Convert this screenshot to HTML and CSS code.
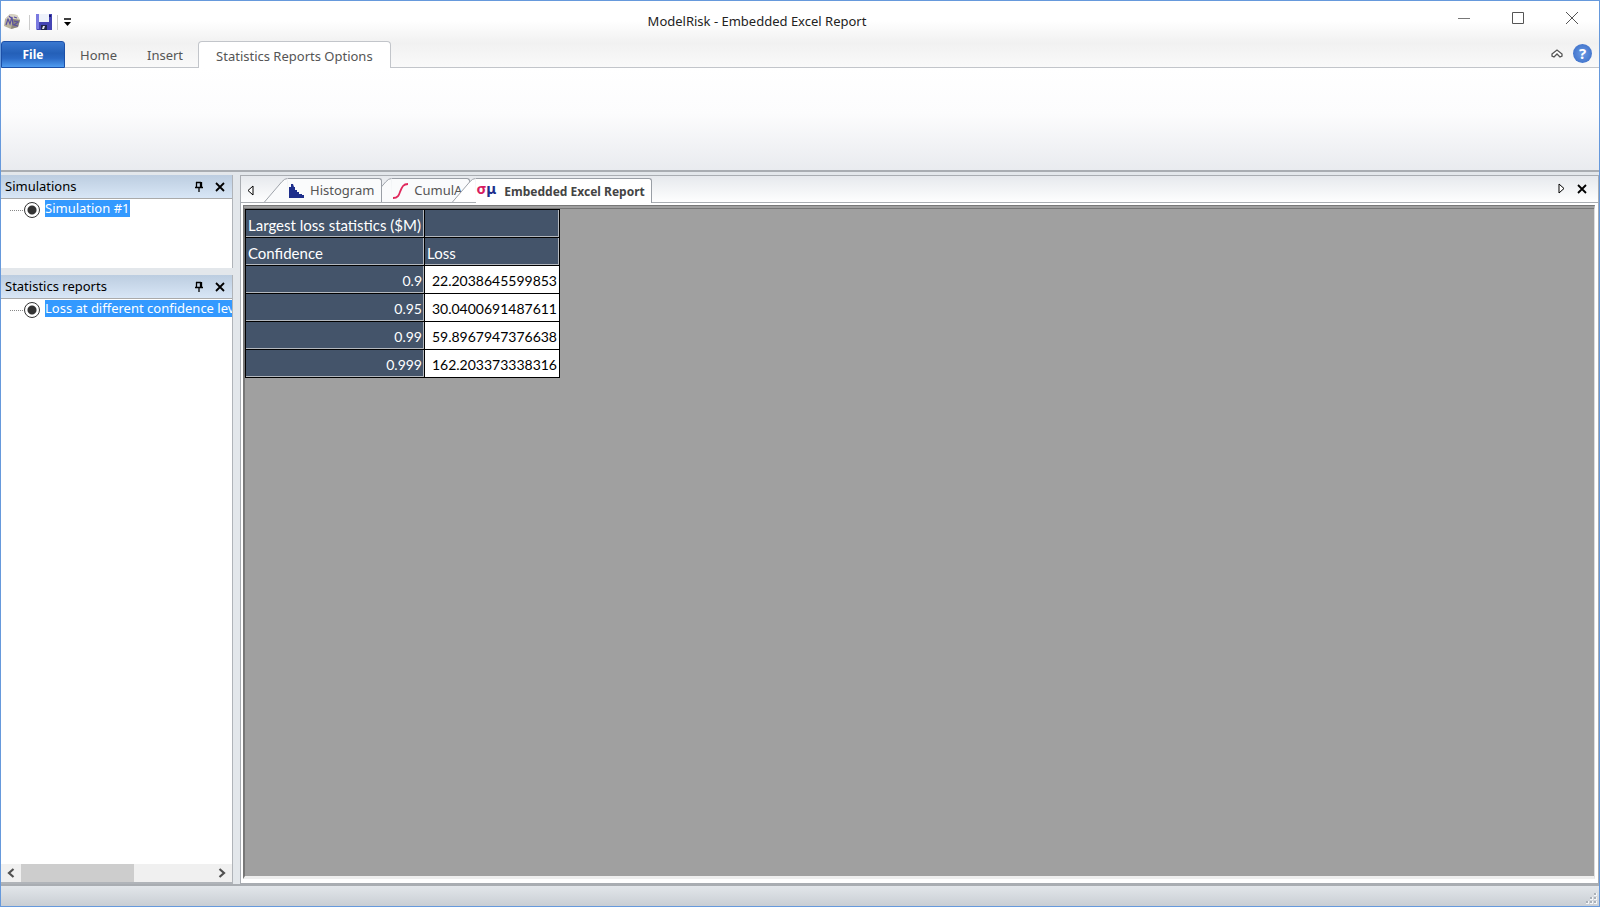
FILE: index.html
```html
<!DOCTYPE html>
<html lang="en">
<head>
  <meta charset="UTF-8">
  <meta name="viewport" content="width=device-width, initial-scale=1.0">
  <title>ModelRisk - Embedded Excel Report</title>
  <link rel="stylesheet" href="styles.css">
</head>
<body>
  <header class="top">
    <div class="titlebar">
      <div class="quick">
        <svg class="logo" width="18" height="18" viewBox="0 0 18 18">
          <path d="M2 6 L7 1 L14 2 L17 7 L15 14 L8 16 L1 13 Z" fill="#b9b39d"/>
          <path d="M2 6 L7 1 L14 2 L17 7 L10 6 Z" fill="#d8d3c4"/>
          <path d="M10 6 L17 7 L15 14 L8 16 Z" fill="#8d877c"/>
          <path d="M3 12 L5 6 L7 11 L9 4 L10 12 M11 4 L14 5 M11 8 L15 9 L11 12 L15 13 M6 3 L8 5" fill="none" stroke="#5a50a0" stroke-width="1.2"/>
        </svg>
        <span class="sep"></span>
        <button class="icon-btn" aria-label="Save">
          <svg width="16" height="16" viewBox="0 0 16 16">
            <path d="M0 0 H16 V16 H1 L0 15 Z" fill="#4444b4"/>
            <path d="M0 0 H3 V15 H0 Z" fill="#7a7ae0"/>
            <rect x="3" y="0" width="10" height="8" fill="#eef2fb"/>
            <rect x="13" y="1" width="2" height="2" fill="#1c1c70"/>
            <rect x="5" y="11" width="6" height="5" fill="#20264c"/>
            <path d="M6 15 L7 12 H9 L8 15 Z" fill="#e4e6ee"/>
          </svg>
        </button>
        <span class="sep"></span>
        <button class="icon-btn" aria-label="Customize">
          <svg width="7" height="8" viewBox="0 0 7 8">
            <path d="M0 1 H7" stroke="#000" stroke-width="1.5"/>
            <path d="M0 4 H7 L3.500 8 Z" fill="#000"/>
          </svg>
        </button>
      </div>
      <h1>ModelRisk - Embedded Excel Report</h1>
      <div class="win-btns">
        <button aria-label="Minimize"><svg width="12" height="12"><path d="M0 6.500 H12" stroke="#777" fill="none"/></svg></button>
        <button aria-label="Maximize"><svg width="12" height="12"><path d="M.5 .5 H11.500 V11.500 H.5 Z" stroke="#555" fill="none"/></svg></button>
        <button aria-label="Close"><svg width="12" height="12"><path d="M0 0 L12 12 M12 0 L0 12" stroke="#555" fill="none"/></svg></button>
      </div>
    </div>

    <nav class="ribbon-tabs">
      <button class="file">File</button>
      <button class="rtab">Home</button>
      <button class="rtab">Insert</button>
      <button class="rtab active">Statistics Reports Options</button>
      <div class="ribbon-end">
        <button class="icon-btn" aria-label="Collapse ribbon">
          <svg width="12" height="9" viewBox="0 0 12 9">
            <path d="M1 5 L6 1 L11 5 V7 L9 8 L6 5 L3 8 L1 7 Z" fill="#fff" stroke="#555" stroke-width="1.3"/>
          </svg>
        </button>
        <button class="icon-btn help" aria-label="Help">?</button>
      </div>
    </nav>
  </header>

  <section class="ribbon"></section>

  <div class="work">
    <aside class="side">
      <section class="panel sims">
        <header class="panel-head">
          <h2>Simulations</h2>
          <button class="icon-btn" aria-label="Pin Simulations">
            <svg width="10" height="12" viewBox="0 0 10 12"><path d="M2.500 1 V6 M2 1.500 H7 M6.500 1 V6 M7.500 1 V6 M1 6.500 H9 M5 7 V11" stroke="#000" stroke-width="1.3" fill="none"/></svg>
          </button>
          <button class="icon-btn" aria-label="Close Simulations">
            <svg width="10" height="10" viewBox="0 0 10 10"><path d="M1 1 L9 9 M9 1 L1 9" stroke="#000" stroke-width="1.8"/></svg>
          </button>
        </header>
        <div class="tree">
          <input type="radio" id="sim1" name="sim" checked>
          <label for="sim1">Simulation #1</label>
        </div>
      </section>

      <section class="panel reports">
        <header class="panel-head">
          <h2>Statistics reports</h2>
          <button class="icon-btn" aria-label="Pin Statistics reports">
            <svg width="10" height="12" viewBox="0 0 10 12"><path d="M2.500 1 V6 M2 1.500 H7 M6.500 1 V6 M7.500 1 V6 M1 6.500 H9 M5 7 V11" stroke="#000" stroke-width="1.3" fill="none"/></svg>
          </button>
          <button class="icon-btn" aria-label="Close Statistics reports">
            <svg width="10" height="10" viewBox="0 0 10 10"><path d="M1 1 L9 9 M9 1 L1 9" stroke="#000" stroke-width="1.8"/></svg>
          </button>
        </header>
        <div class="tree">
          <input type="radio" id="rep1" name="report" checked>
          <label for="rep1">Loss at different confidence levels</label>
        </div>
        <div class="hscroll">
          <button class="icon-btn" aria-label="Scroll left">
            <svg width="8" height="10" viewBox="0 0 8 10"><path d="M6.500 1 L2 5 L6.500 9" stroke="#505050" stroke-width="2.2" fill="none"/></svg>
          </button>
          <div class="track"><div class="thumb"></div></div>
          <button class="icon-btn" aria-label="Scroll right">
            <svg width="8" height="10" viewBox="0 0 8 10"><path d="M1.500 1 L6 5 L1.500 9" stroke="#505050" stroke-width="2.2" fill="none"/></svg>
          </button>
        </div>
      </section>
    </aside>

    <main class="doc">
      <div class="doc-tabs">
        <button class="icon-btn prev" aria-label="Previous tab">
          <svg width="7" height="11" viewBox="0 0 7 11"><path d="M6 1 V10 L1 5.500 Z" fill="#fff" stroke="#000"/></svg>
        </button>
        <button class="dtab first">
          <svg class="slant" width="24" height="25" viewBox="0 0 24 25"><path d="M0 25 L18 4 Q21 .5 24 .5 V25 Z" fill="#fafbfc"/><path d="M0 25 L18 4 Q21 .5 24 .5" fill="none" stroke="#9a9fa6"/></svg>
          <span class="dtab-body">
            <svg width="17" height="16" viewBox="0 0 17 16"><path d="M1 15 V4 H3 V1 H5 L6 4 H7 V7 H9 V9 H11 V11 H14 V12 H16 V15 Z" fill="#1e2f8c"/></svg>
            Histogram
          </span>
        </button>
        <button class="dtab second">
          <svg class="slant" width="24" height="25" viewBox="0 0 24 25"><path d="M0 25 L18 4 Q21 .5 24 .5 V25 Z" fill="#fafbfc"/><path d="M0 25 L18 4 Q21 .5 24 .5" fill="none" stroke="#9a9fa6"/></svg>
          <span class="dtab-body">
            <svg width="17" height="16" viewBox="0 0 17 16"><path d="M1 15 C6 15 7 12 8 9 C10 4 11 1 16 1" fill="none" stroke="#e0285c" stroke-width="1.8"/></svg>
            CumulA
          </span>
        </button>
        <button class="dtab current">
          <svg class="slant" width="24" height="25" viewBox="0 0 24 25"><path d="M0 25 L18 4 Q21 .5 24 .5 V25 Z" fill="#fff"/><path d="M0 25 L18 4 Q21 .5 24 .5" fill="none" stroke="#9a9fa6"/></svg>
          <span class="dtab-body">
            <span class="stat-icon"><i>σ</i>μ</span>
            Embedded Excel Report
          </span>
        </button>
        <div class="doc-end">
          <button class="icon-btn" aria-label="Next tab">
            <svg width="7" height="11" viewBox="0 0 7 11"><path d="M1 1 V10 L6 5.500 Z" fill="#fff" stroke="#000"/></svg>
          </button>
          <button class="icon-btn" aria-label="Close tab">
            <svg width="10" height="10" viewBox="0 0 10 10"><path d="M1 1 L9 9 M9 1 L1 9" stroke="#000" stroke-width="1.8"/></svg>
          </button>
        </div>
      </div>

      <div class="sheet">
        <table>
          <thead>
            <tr><th>Largest loss statistics ($M)</th><th></th></tr>
            <tr><th>Confidence</th><th>Loss</th></tr>
          </thead>
          <tbody>
            <tr><th>0.9</th><td>22.2038645599853</td></tr>
            <tr><th>0.95</th><td>30.0400691487611</td></tr>
            <tr><th>0.99</th><td>59.8967947376638</td></tr>
            <tr><th>0.999</th><td>162.203373338316</td></tr>
          </tbody>
        </table>
      </div>
    </main>
  </div>

  <footer class="status">
    <svg width="14" height="14" viewBox="0 0 14 14">
      <path d="M9 1h3v3h-3z M5 5h3v3h-3z M9 5h3v3h-3z M1 9h3v3h-3z M5 9h3v3h-3z M9 9h3v3h-3z" fill="#f4f6f8"/>
      <path d="M9 1h2v2h-2z M5 5h2v2h-2z M9 5h2v2h-2z M1 9h2v2h-2z M5 9h2v2h-2z M9 9h2v2h-2z" fill="#a9b0b8"/>
    </svg>
  </footer>
</body>
</html>
```
FILE: styles.css
```css
* { box-sizing: border-box; }

body {
  margin: 0;
  height: 100vh;
  display: flex;
  flex-direction: column;
  border: 1px solid #6699dc;
  background: #e3e7eb;
  font-family: "Noto Sans", "Open Sans", sans-serif;
  font-size: 13px;
  line-height: 17px;
  color: #222;
  overflow: hidden;
}

h1, h2 {
  margin: 0;
  font-size: 13px;
  font-weight: normal;
}

button {
  font: inherit;
  color: inherit;
  border: 0;
  padding: 0;
  background: none;
}

svg { display: block; }

.icon-btn {
  display: flex;
  align-items: center;
  justify-content: center;
}

/* Title bar and ribbon tabs share one gradient */
.top {
  background: linear-gradient(#fff 0, #fff 20px, #f1f1f1 42px, #fafafa 67px);
}

.titlebar {
  display: flex;
  height: 40px;
}
.quick {
  display: flex;
  align-items: center;
  gap: 5px;
  width: 76px;
  padding: 2px 0 0 2px;
}
.logo { margin-right: 3px; }
.quick .sep + .icon-btn { margin-left: 1px; }
.sep {
  width: 1px;
  height: 15px;
  background: #ccc;
}
.titlebar h1 {
  flex: 1;
  text-align: center;
  line-height: 41px;
}
.win-btns { display: flex; }
.win-btns button {
  display: flex;
  justify-content: center;
  align-items: center;
  width: 54px;
  height: 34px;
}

.ribbon-tabs {
  display: flex;
  height: 27px;
  color: #555;
  box-shadow: inset 0 -1px #c2c5ca;
}
.file {
  width: 64px;
  border: 1px solid #1c50a8;
  border-radius: 3px 3px 0 0;
  background: linear-gradient(#3a78d0, #2460b8 45%, #2a68c4 65%, #4f9cf0);
  color: #fff;
  font-size: 12px;
  font-weight: bold;
}
.rtab { padding: 2px 15px 0; }
.rtab.active {
  padding: 2px 17px 0;
  border: 1px solid #c2c5ca;
  border-bottom: 0;
  border-radius: 4px 4px 0 0;
  background: #fff;
}
.ribbon-end {
  display: flex;
  align-items: center;
  gap: 10px;
  margin-left: auto;
  padding: 0 7px 2px 0;
}
.help {
  width: 19px;
  height: 19px;
  border-radius: 50%;
  background: radial-gradient(#6b9be4, #3568c4);
  color: #fff;
  font-size: 15px;
  font-weight: bold;
}

.ribbon {
  height: 104px;
  border-bottom: 2px solid #a9adb2;
  background: linear-gradient(#fff, #fcfcfd 45%, #e9ebef);
}

/* Work area */
.work {
  flex: 1;
  display: flex;
  gap: 7px;
  min-height: 0;
  padding-top: 3px;
}

.side {
  display: flex;
  flex-direction: column;
  gap: 7px;
  width: 232px;
}
.panel {
  display: flex;
  flex-direction: column;
  border-right: 1px solid #b0b4b9;
  background: #fff;
}
.sims { height: 93px; }
.reports {
  flex: 1;
  border-bottom: 2px solid #b0b4b9;
}
.panel-head {
  display: flex;
  align-items: center;
  gap: 11px;
  height: 24px;
  padding: 0 7px 0 4px;
  border-bottom: 1px solid #aaa;
  background: linear-gradient(#bccde0, #d8e6f6);
  color: #000;
}
.panel-head h2 { flex: 1; }
.tree {
  display: flex;
  align-items: flex-start;
  flex: 1;
  padding-left: 9px;
  overflow: hidden;
}
.tree::before {
  content: "";
  flex: none;
  width: 13px;
  margin-top: 11px;
  border-top: 1px dotted #888;
}
.tree input {
  appearance: none;
  flex: none;
  width: 16px;
  height: 16px;
  margin: 3px 5px 0 1px;
  border: 1px solid #333;
  border-radius: 50%;
  background: radial-gradient(#333 4px, #fff 5px);
}
.tree label {
  margin-top: 1px;
  background: #3399ff;
  color: #fff;
  white-space: nowrap;
}

.hscroll {
  display: flex;
  height: 18px;
  background: #f0f0f0;
}
.hscroll button { width: 20px; }
.track { flex: 1; }
.thumb {
  width: 59%;
  height: 100%;
  background: #cdcdcd;
}

/* Documents */
.doc {
  flex: 1;
  display: flex;
  flex-direction: column;
  min-width: 0;
  border: 1px solid #a9adb2;
  background: #fff;
}
.doc-tabs {
  display: flex;
  align-items: flex-end;
  height: 27px;
  background: linear-gradient(#e6e9ed, #fff);
  box-shadow: inset 0 -1px #a9adb2;
  color: #555;
}
.prev {
  width: 18px;
  height: 25px;
  margin-right: 5px;
}
.dtab {
  display: flex;
  position: relative;
  height: 25px;
}
.dtab-body {
  display: flex;
  align-items: center;
  gap: 5px;
  height: 24px;
  padding-right: 7px;
  border-top: 1px solid #9a9fa6;
  border-right: 1px solid #9a9fa6;
  border-radius: 0 3px 0 0;
  background: #fafbfc;
}
.slant { height: 24px; }
.first { z-index: 2; }
.second {
  z-index: 1;
  margin-left: -14px;
}
.current {
  z-index: 3;
  margin-left: -18px;
  font-size: 12px;
  font-weight: bold;
  color: #444;
}
.current .dtab-body {
  gap: 8px;
  height: 25px;
  padding-right: 6px;
  background: #fff;
}
.stat-icon {
  padding-bottom: 5px;
  color: #1e2f8c;
  font-size: 15px;
}
.stat-icon i {
  color: #d81b60;
  font-style: normal;
}
.doc-end {
  display: flex;
  gap: 12px;
  height: 27px;
  margin-left: auto;
  padding: 0 11px 2px 0;
}

.sheet {
  flex: 1;
  margin: 2px 3px 4px 2px;
  border: 1px solid #777;
  border-top: 4px double #777;
  border-left-width: 2px;
  border-right-color: #ddd;
  border-bottom: 3px solid #eee;
  background: #a0a0a0;
}

table {
  border-spacing: 0;
  border: 1px solid #000;
  border-width: 1px 0 0 1px;
  font-family: Lato, sans-serif;
  font-size: 14px;
  line-height: 18px;
}
th, td {
  height: 28px;
  padding: 3px 2px 0;
  border: 1px solid #000;
  border-width: 0 1px 1px 0;
  text-align: right;
}
th {
  background: #44546a;
  box-shadow: inset -1px -1px #b4b8be;
  color: #fff;
  font-weight: normal;
}
td {
  background: #fff;
  color: #000;
}
th:first-child { width: 179px; }
th + th, td { width: 135px; }
thead th {
  font-size: 15px;
  text-align: left;
}

.status {
  display: flex;
  justify-content: flex-end;
  align-items: flex-end;
  height: 22px;
  border-top: 2px solid #a9adb2;
  background: linear-gradient(#e2e6ea, #c9ced4);
}
```
